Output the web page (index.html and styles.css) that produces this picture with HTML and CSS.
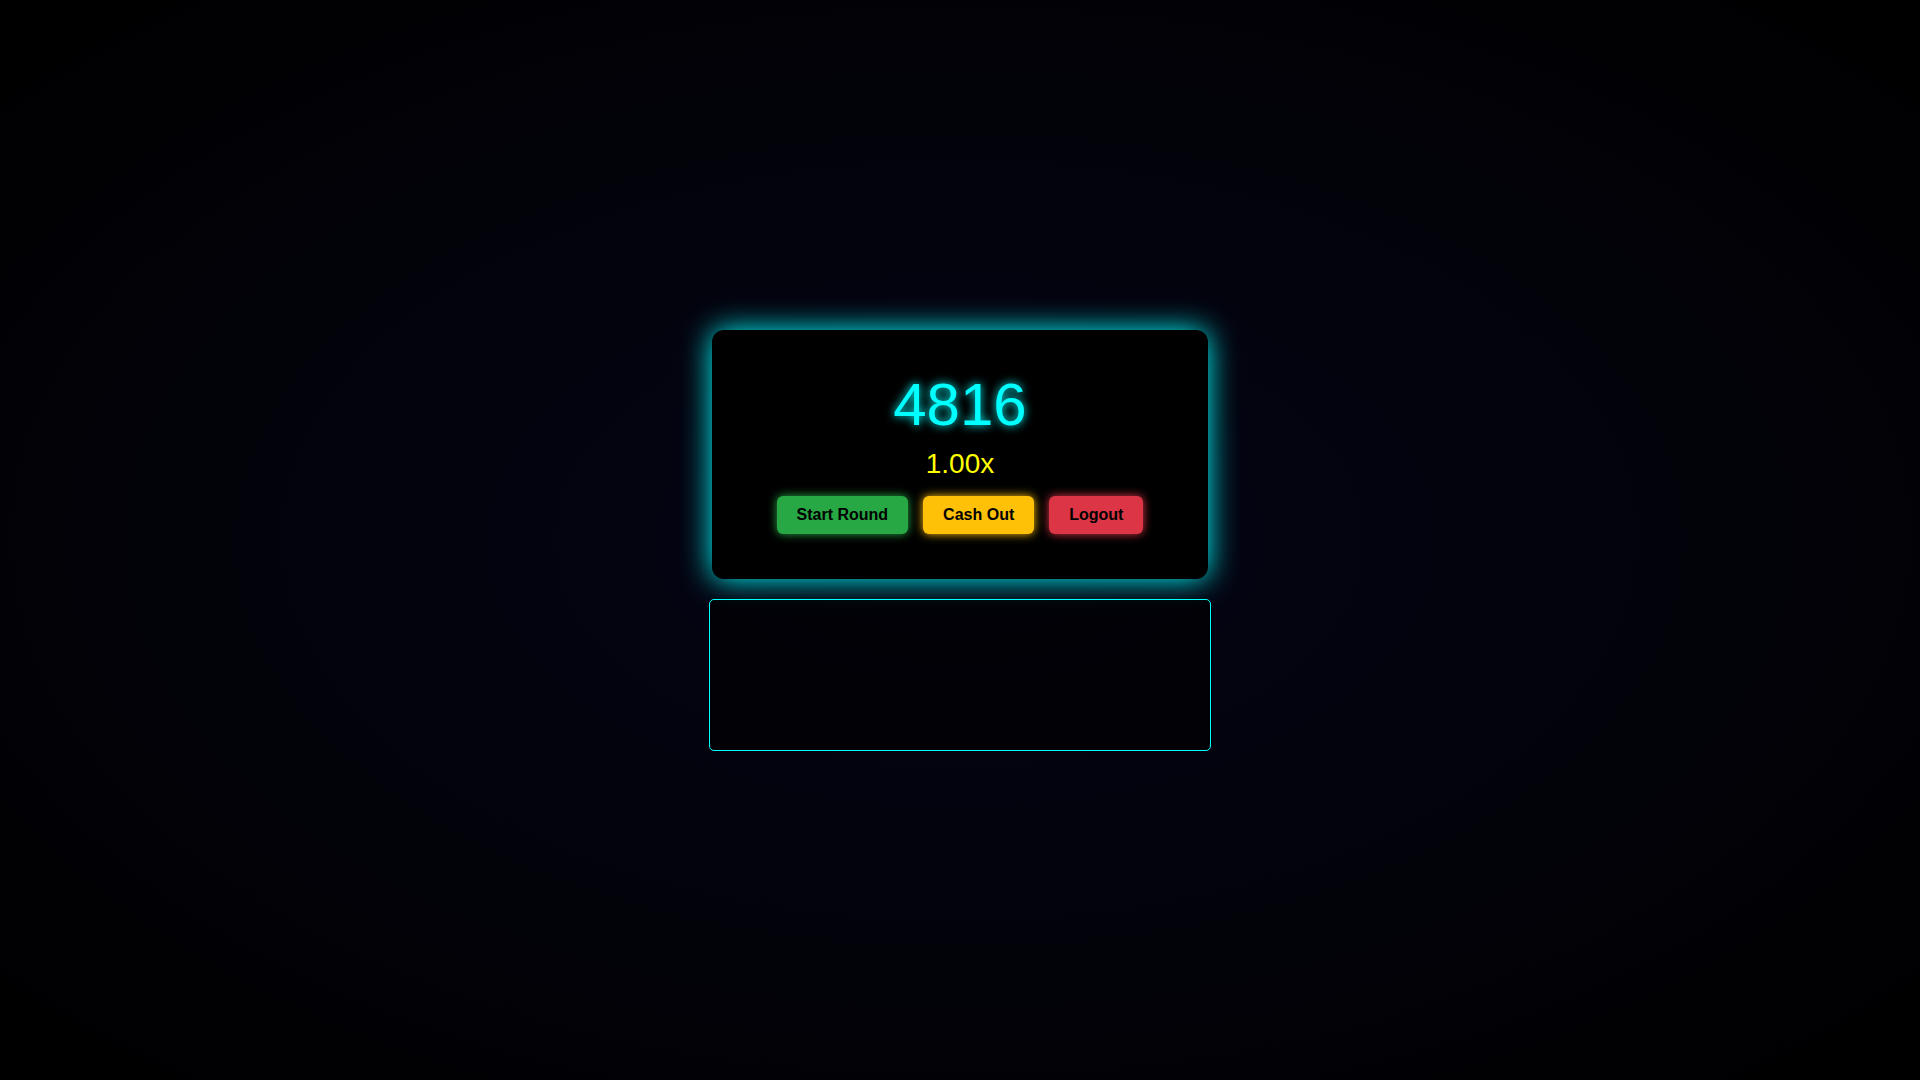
FILE: index.html
```html
<!DOCTYPE html>
<html lang="en">
<head>
<meta charset="utf-8">
<title>Crash Game</title>
<link rel="stylesheet" href="styles.css">
</head>
<body>
  <main class="page">
    <section class="game-card">
      <h1 class="counter">4816</h1>
      <p class="multiplier">1.00x</p>
      <div class="actions">
        <button class="btn btn-start">Start Round</button>
        <button class="btn btn-cash">Cash Out</button>
        <button class="btn btn-logout">Logout</button>
      </div>
    </section>
    <section class="log-box"></section>
  </main>
</body>
</html>
```
FILE: styles.css
```css
html, body {
  margin: 0;
  padding: 0;
  height: 100%;
}

body {
  background: radial-gradient(ellipse at center, #050516 0%, #000000 100%);
  font-family: "Liberation Sans", Arial, sans-serif;
  color: #fff;
}

.page {
  min-height: 100vh;
  display: flex;
  flex-direction: column;
  align-items: center;
  justify-content: center;
  gap: 20px;
}

.game-card {
  width: 496px;
  box-sizing: border-box;
  padding: 40px 20px 45px;
  background: #000;
  border-radius: 12px;
  box-shadow: 0 0 30px #00ffff;
  display: flex;
  flex-direction: column;
  align-items: center;
}

.counter {
  margin: 0;
  font-size: 60px;
  font-weight: normal;
  line-height: normal;
  color: #00ffff;
  text-shadow: 0 0 10px #00ffff;
}

.multiplier {
  margin: 9px 0 0;
  font-size: 28px;
  line-height: normal;
  color: #ffff00;
}

.actions {
  margin-top: 16px;
  display: flex;
  gap: 15px;
  justify-content: center;
}

.btn {
  font-family: "Liberation Sans", Arial, sans-serif;
  font-size: 16px;
  font-weight: bold;
  line-height: normal;
  color: #000;
  border: none;
  border-radius: 6px;
  padding: 10px 20px;
  cursor: pointer;
}

.btn-start {
  background: #28a745;
  box-shadow: 0 0 10px #28a745;
}

.btn-cash {
  background: #ffc107;
  box-shadow: 0 0 10px #ffc107;
}

.btn-logout {
  background: #dc3545;
  box-shadow: 0 0 10px #dc3545;
}

.log-box {
  width: 502px;
  height: 152px;
  box-sizing: border-box;
  border: 1px solid #00ffff;
  border-radius: 5px;
  background: rgba(0, 0, 0, 0.6);
}
```
